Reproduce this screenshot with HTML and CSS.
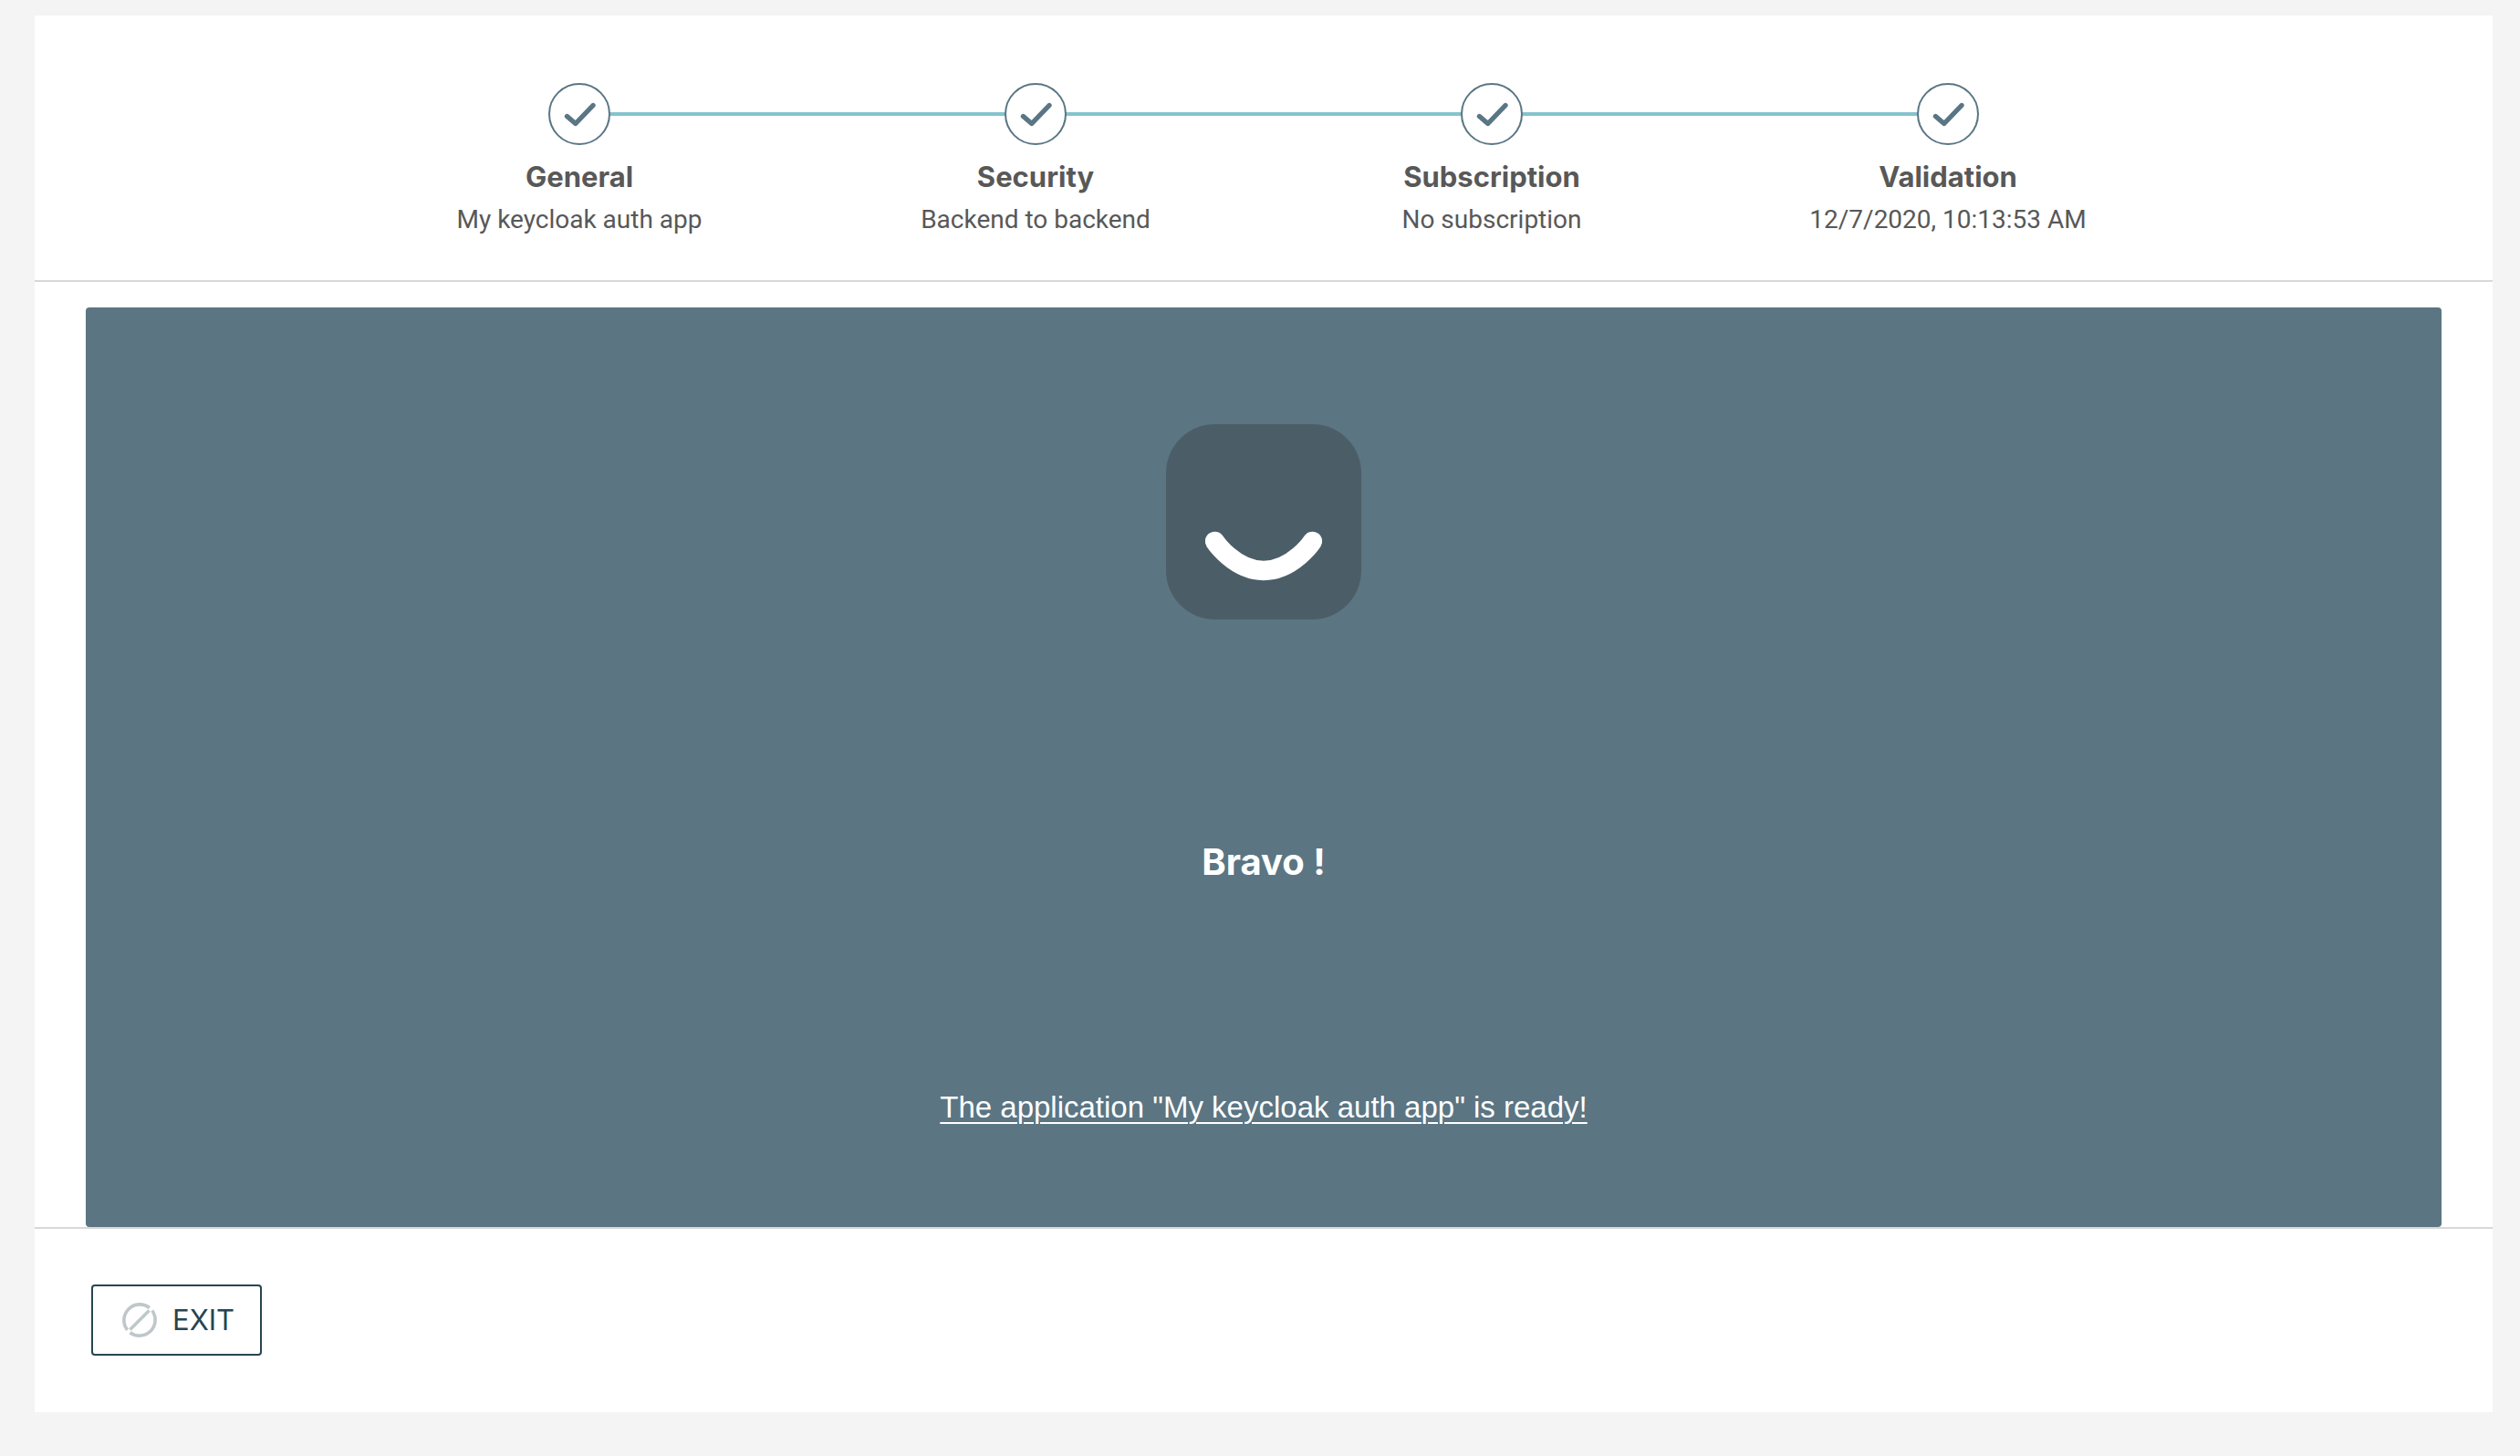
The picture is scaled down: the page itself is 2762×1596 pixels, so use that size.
FILE: index.html
```html
<!DOCTYPE html>
<html lang="en">
<head>
<meta charset="utf-8">
<meta name="viewport" content="width=device-width, initial-scale=1">
<title>Create application</title>
<link rel="stylesheet" href="styles.css">
</head>
<body>
<svg class="sprite" aria-hidden="true">
  <symbol id="check" viewBox="-20 -20 40 40">
    <path d="M-13.5 2.5 L-4.2 10.5 L15 -9.5" fill="none" stroke="currentColor" stroke-width="5.4" stroke-linecap="round" stroke-linejoin="round"/>
  </symbol>
</svg>
<main class="card">
  <header class="card-header">
    <ol class="steps">
      <li class="step">
        <span class="marker"><svg class="check"><use href="#check"/></svg></span>
        <span class="step-title">General</span>
        <span class="step-text">My keycloak auth app</span>
      </li>
      <li class="step">
        <span class="marker"><svg class="check"><use href="#check"/></svg></span>
        <span class="step-title">Security</span>
        <span class="step-text">Backend to backend</span>
      </li>
      <li class="step">
        <span class="marker"><svg class="check"><use href="#check"/></svg></span>
        <span class="step-title">Subscription</span>
        <span class="step-text">No subscription</span>
      </li>
      <li class="step">
        <span class="marker"><svg class="check"><use href="#check"/></svg></span>
        <span class="step-title">Validation</span>
        <span class="step-text">12/7/2020, 10:13:53 AM</span>
      </li>
    </ol>
  </header>
  <section class="panel">
    <svg class="smile" viewBox="0 0 20 20" aria-hidden="true">
      <rect width="20" height="20" rx="5" fill="#4b5e67"/>
      <path d="M5 12s2 3 5 3 5-3 5-3" fill="none" stroke="#fff" stroke-width="2" stroke-linecap="round" stroke-linejoin="round"/>
    </svg>
    <h1 class="panel-title">Bravo !</h1>
    <a class="panel-link" href="#">The application "My keycloak auth app" is ready!</a>
  </section>
  <footer class="card-footer">
    <button class="button" type="button">
      <svg class="button-icon" viewBox="-20 -20 40 40" aria-hidden="true">
        <g fill="none" stroke="#bfc7ca" stroke-width="3.6">
          <path d="M10.9 -13.4 A17.3 17.3 0 0 0 -13.4 10.9"/>
          <path d="M13.7 -10.5 A17.3 17.3 0 0 1 -10.5 13.7"/>
          <path d="M10.5 -10.5 L-10.5 10.5"/>
        </g>
      </svg>
      <span>EXIT</span>
    </button>
  </footer>
</main>
</body>
</html>
```
FILE: styles.css
```css
* {
  box-sizing: border-box;
}

body {
  margin: 0;
  padding: 17px 30px 48px 38px;
  background: #f4f4f4;
  color: #585858;
  font-family: Inter, "Liberation Sans", sans-serif;
}

.sprite {
  display: none;
}

.card {
  background: #fff;
}

.card-header {
  padding: 74px 32px 48px;
  border-bottom: 2px solid #d8d8d8;
}

.steps {
  display: flex;
  max-width: 2000px;
  margin: 0 auto;
  padding: 0;
  list-style: none;
}

.step {
  position: relative;
  flex: 1;
  display: flex;
  flex-direction: column;
  align-items: center;
  text-align: center;
}

/* connector from the previous marker to this one */
.step + .step::before {
  content: "";
  position: absolute;
  top: 32px;
  right: 50%;
  width: 100%;
  height: 4px;
  background: #85c3cf;
}

.marker {
  position: relative;
  z-index: 1;
  display: flex;
  align-items: center;
  justify-content: center;
  width: 68px;
  height: 68px;
  margin-bottom: 14px;
  border: 2px solid #5a7684;
  border-radius: 50%;
  background: #fff;
  color: #5a7684;
}

.check {
  width: 40px;
  height: 40px;
}

.step-title {
  margin-bottom: 8px;
  font-size: 31px;
  font-weight: 700;
  line-height: 42px;
}

.step-text {
  font-family: Roboto, sans-serif;
  font-size: 28px;
  line-height: 36px;
}

.panel {
  display: flex;
  flex-direction: column;
  align-items: center;
  margin: 28px 56px 0;
  padding: 128px 32px 107px;
  border-radius: 4px;
  background: #5b7583;
  color: #fff;
}

.smile {
  width: 214px;
  height: 214px;
}

.panel-title {
  margin: 238px 0 217px;
  font-size: 40px;
  font-weight: 700;
  line-height: 56px;
}

.panel-link {
  color: inherit;
  font-family: "Liberation Sans", sans-serif;
  font-size: 33px;
  line-height: 48px;
  text-decoration-thickness: 2px;
  text-underline-offset: 5px;
}

.card-footer {
  padding: 61px 62px 62px;
  border-top: 2px solid #d8d8d8;
}

.button {
  display: flex;
  align-items: center;
  gap: 16px;
  height: 78px;
  padding: 0 28px 0 31px;
  border: 2px solid #274550;
  border-radius: 4px;
  background: #fff;
  color: #274550;
  font-family: inherit;
  font-size: 31px;
  line-height: 40px;
}

.button-icon {
  width: 40px;
  height: 40px;
}
```
